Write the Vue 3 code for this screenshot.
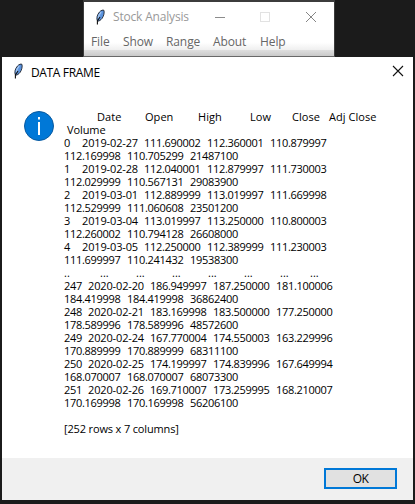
<script setup>
const headers = ['Date', 'Open', 'High', 'Low', 'Close', 'Adj Close']

const head = [
  ['0', '2019-02-27', '111.690002', '112.360001', '110.879997', '112.169998', '110.705299', '21487100'],
  ['1', '2019-02-28', '112.040001', '112.879997', '111.730003', '112.029999', '110.567131', '29083900'],
  ['2', '2019-03-01', '112.889999', '113.019997', '111.669998', '112.529999', '111.060608', '23501200'],
  ['3', '2019-03-04', '113.019997', '113.250000', '110.800003', '112.260002', '110.794128', '26608000'],
  ['4', '2019-03-05', '112.250000', '112.389999', '111.230003', '111.699997', '110.241432', '19538300'],
]

const tail = [
  ['247', '2020-02-20', '186.949997', '187.250000', '181.100006', '184.419998', '184.419998', '36862400'],
  ['248', '2020-02-21', '183.169998', '183.500000', '177.250000', '178.589996', '178.589996', '48572600'],
  ['249', '2020-02-24', '167.770004', '174.550003', '163.229996', '170.889999', '170.889999', '68311100'],
  ['250', '2020-02-25', '174.199997', '174.839996', '167.649994', '168.070007', '168.070007', '68073300'],
  ['251', '2020-02-26', '169.710007', '173.259995', '168.210007', '170.169998', '170.169998', '56206100'],
]

const dots = ['..', '...', '...', '...', '...', '...', '...', '...']
const menu = ['File', 'Show', 'Range', 'About', 'Help']
</script>

<template>
  <div class="desktop">
    <section class="parent">
      <header class="parent-bar">
        <svg class="feather" viewBox="0 0 10 16">
          <path d="M2.500 12.200C1.200 9.500 2 5.800 4.500 3 6 1.300 8 .7 8.900 1.300c.7 1.900 0 5.700-1.900 8.200-1.300 1.600-2.800 2.700-4.500 2.700Z" fill="#5b93de" stroke="#20242c" stroke-width=".9" />
          <path d="M3.300 9.500C3.400 7 4.500 4.700 6.200 3" fill="none" stroke="#a3c6f2" stroke-width="1.300" />
          <path d="M2.400 15.500V12L5 8" fill="none" stroke="#111" stroke-width="1.100" />
        </svg>
        <span class="parent-title">Stock Analysis</span>
        <svg class="controls" viewBox="0 0 92 12">
          <path d="M0 6.500H10" stroke="#8c8c8c" />
          <rect x="45.500" y="1.500" width="9" height="9" fill="none" stroke="#e2e2e2" />
          <path d="m91 1 10 10m0-10L91 11" stroke="#858585" />
        </svg>
      </header>
      <nav class="menu">
        <span v-for="m in menu" :key="m">{{ m }}</span>
      </nav>
      <div class="parent-edge"></div>
    </section>

    <main class="dialog">
      <header class="dialog-bar">
        <svg class="feather" viewBox="0 0 10 16">
          <path d="M2.500 12.200C1.200 9.500 2 5.800 4.500 3 6 1.300 8 .7 8.900 1.300c.7 1.900 0 5.700-1.900 8.200-1.300 1.600-2.800 2.700-4.500 2.700Z" fill="#5b93de" stroke="#20242c" stroke-width=".9" />
          <path d="M3.300 9.500C3.400 7 4.500 4.700 6.200 3" fill="none" stroke="#a3c6f2" stroke-width="1.300" />
          <path d="M2.400 15.500V12L5 8" fill="none" stroke="#111" stroke-width="1.100" />
        </svg>
        <h1>DATA FRAME</h1>
        <svg class="close" viewBox="0 0 12 12">
          <path d="m1 1 10 10m0-10L1 11" stroke="#111" stroke-width="1.100" />
        </svg>
      </header>

      <div class="content">
        <svg class="info" viewBox="0 0 30 30">
          <circle cx="15" cy="15" r="14.500" fill="#0078d7" stroke="#0a5a9f" />
          <rect x="14" y="6" width="2" height="2.500" fill="#fff" />
          <rect x="14" y="11" width="2" height="13" fill="#fff" />
        </svg>
        <div class="frame">
          <div class="line heading">
            <span v-for="h in headers" :key="h">{{ h }}</span>
          </div>
          <div class="line volume">Volume</div>
          <template v-for="r in head" :key="r[0]">
            <div class="line short">
              <span v-for="(c, i) in r.slice(0, 5)" :key="i" :class="{ date: i === 1 }">{{ c }}</span>
            </div>
            <div class="line rest">
              <span v-for="(c, i) in r.slice(5)" :key="i">{{ c }}</span>
            </div>
          </template>
          <div class="line dots">
            <span v-for="(d, i) in dots" :key="i">{{ d }}</span>
          </div>
          <template v-for="r in tail" :key="r[0]">
            <div class="line long">
              <span v-for="(c, i) in r.slice(0, 5)" :key="i" :class="{ date: i === 1 }">{{ c }}</span>
            </div>
            <div class="line rest">
              <span v-for="(c, i) in r.slice(5)" :key="i">{{ c }}</span>
            </div>
          </template>
          <div class="line summary">[252 rows x 7 columns]</div>
        </div>
      </div>

      <footer class="actions">
        <button type="button">OK</button>
      </footer>
    </main>
  </div>
</template>

<style>
body {
  background: #1b1b1b;
}
</style>

<style scoped>
.desktop {
  box-sizing: border-box;
  width: 415px;
  height: 504px;
  overflow: hidden;
  background: #1b1b1b;
  font-family: "Open Sans", "Noto Sans", sans-serif;
  font-size: 11px;
  color: #000;
}
.parent {
  display: flex;
  flex-direction: column;
  box-sizing: border-box;
  width: 252px;
  height: 57px;
  margin-left: 83px;
  border: 1px solid #3c3c3c;
  border-top-width: 2px;
  border-bottom-color: #686868;
  background: #fff;
}
.parent-bar {
  display: flex;
  align-items: center;
  height: 29px;
  padding-left: 11px;
}
.feather {
  width: 10px;
  height: 16px;
  flex: none;
}
.parent-title {
  width: 109px;
  margin-left: 8px;
  color: #999;
  font-size: 12px;
  letter-spacing: -0.18px;
  white-space: nowrap;
}
.controls {
  width: 92px;
  height: 12px;
  margin-left: -7px;
  overflow: visible;
}
.menu {
  display: grid;
  grid-template-columns: 32px 43px 47px 47px 40px;
  height: 19px;
  padding-left: 7px;
  color: #666;
  font-size: 12px;
  line-height: 22px;
  letter-spacing: -0.1px;
  background: linear-gradient(#fff 60%, #efefef);
}
.parent-edge {
  flex: 1;
  background: linear-gradient(#dedede, #c9c9c9);
}
.dialog {
  display: flex;
  flex-direction: column;
  width: 411px;
  height: 443px;
  margin-left: 2px;
  background: #fff;
}
.dialog-bar {
  display: flex;
  align-items: center;
  height: 30px;
  padding: 0 9px 0 11px;
}
.dialog-bar .feather {
  margin-top: -2px;
}
.dialog-bar h1 {
  flex: 1;
  margin: 0 0 0 8px;
  font-size: 12px;
  font-weight: 400;
  letter-spacing: -0.35px;
}
.close {
  width: 12px;
  height: 12px;
  margin-top: -2px;
}
.content {
  display: flex;
  flex: 1;
  padding: 23px 0 0 22px;
}
.info {
  width: 30px;
  height: 30px;
  margin-top: 1px;
  flex: none;
}
.frame {
  margin-left: 10px;
}
.line {
  display: grid;
  height: 13px;
  line-height: 13px;
  letter-spacing: -0.29px;
  white-space: pre;
}
.heading {
  grid-template-columns: 48px 53px 52px 42px 37px 60px;
  padding-left: 33px;
  letter-spacing: 0.05px;
}
.volume {
  padding-left: 3px;
  letter-spacing: -0.1px;
}
.short {
  grid-template-columns: 18px 62px 63px 63px 63px;
}
.long {
  grid-template-columns: 24px 62px 63px 63px 63px;
}
.rest {
  grid-template-columns: 63px 63px 60px;
}
.date {
  letter-spacing: -0.14px;
}
.dots {
  grid-template-columns: 36px 36px 36px 36px 36px 36px 30px 12px;
  letter-spacing: 0;
}
.summary {
  margin-top: 13px;
  letter-spacing: -0.15px;
}
.actions {
  display: flex;
  justify-content: flex-end;
  height: 42px;
  box-sizing: border-box;
  padding: 10px 16px 11px;
  background: #f0f0f0;
}
.actions button {
  width: 73px;
  height: 21px;
  padding: 0;
  border: 2px solid #0078d7;
  background: #e1e1e1;
  font: 12px/17px "Open Sans", "Noto Sans", sans-serif;
  letter-spacing: -0.5px;
  color: #000;
}
</style>
